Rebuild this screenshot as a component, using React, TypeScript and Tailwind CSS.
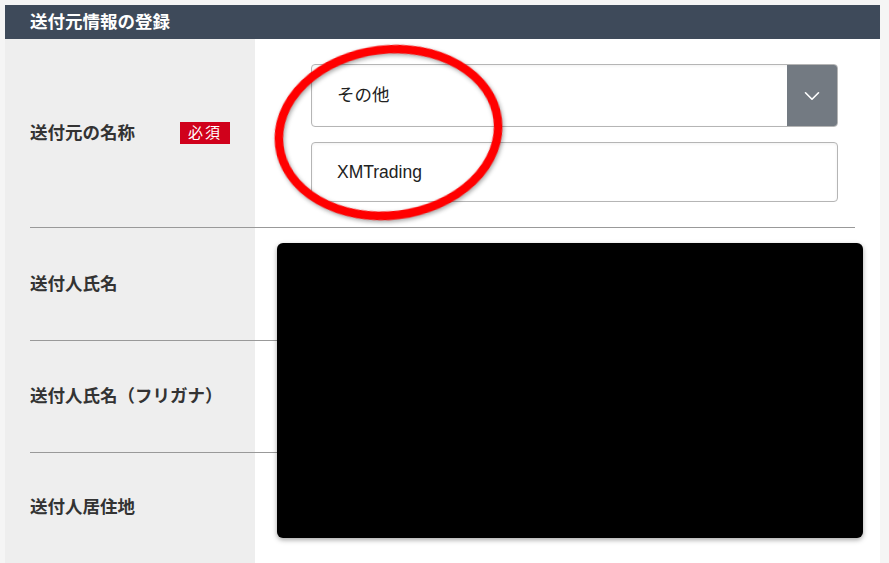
import { ChevronDown } from "lucide-react";

const font = "font-['Liberation_Sans','Noto_Sans_CJK_JP',sans-serif]";

const Row = ({
  label,
  height,
  last,
  children,
}: {
  label: React.ReactNode;
  height?: string;
  last?: boolean;
  children?: React.ReactNode;
}) => (
  <div className="px-[25px]">
    <div className={`flex ${last ? "" : "border-b border-[#999999]"} ${height ?? ""}`}>
      <div className="w-[225px] flex items-center text-[17.5px] font-bold text-[#333333]">{label}</div>
      <div className="flex-1">{children}</div>
    </div>
  </div>
);

export default function App() {
  return (
    <div className={`relative min-h-screen bg-[#f5f5f5] pt-[5px] ${font}`}>
      <div className="ml-[5px] w-[875px] h-[558px] overflow-hidden bg-[linear-gradient(to_right,#eeeeee_250px,#ffffff_250px)]">
        {/* Header */}
        <div className="h-[34px] bg-[#3e4a5a] flex items-center pl-[25px]">
          <h2 className="text-white text-[17.5px] font-bold">送付元情報の登録</h2>
        </div>

        {/* 送付元の名称 */}
        <Row
          label={
            <div className="flex items-center">
              <span>送付元の名称</span>
              <span className="ml-[45px] w-[50px] h-[22px] bg-[#d0011b] text-white text-[15px] font-normal flex items-center justify-center tracking-[2px]">
                必須
              </span>
            </div>
          }
        >
          <div className="pl-[56px] pr-[17px] py-[25px] flex flex-col gap-[15px]">
            <div className="h-[63px] flex border border-[#b5b5b5] rounded-[4px] overflow-hidden shadow-[inset_0_1px_3px_rgba(0,0,0,0.06)]">
              <div className="flex-1 flex items-center pl-[25px] text-[17.5px] text-[#222222]">その他</div>
              <div className="w-[50px] bg-[#737a82] flex items-center justify-center">
                <ChevronDown className="w-[26px] h-[26px] text-white" strokeWidth={1.5} />
              </div>
            </div>
            <div className="h-[60px] flex items-center border border-[#b5b5b5] rounded-[4px] pl-[25px] text-[17.5px] text-[#222222] shadow-[inset_0_1px_3px_rgba(0,0,0,0.06)]">
              XMTrading
            </div>
          </div>
        </Row>

        <Row label="送付人氏名" height="h-[113px]" />
        <Row label="送付人氏名（フリガナ）" height="h-[112px]" />
        <Row label="送付人居住地" height="h-[108px]" last />
      </div>

      {/* redacted area */}
      <div className="absolute left-[277px] top-[243px] w-[586px] h-[295px] bg-black rounded-[6px] shadow-[0_2px_5px_rgba(0,0,0,0.35)]" />

      {/* annotation ring */}
      <svg className="absolute left-0 top-0 pointer-events-none" width="889" height="563">
        <ellipse
          cx="388.5"
          cy="132.5"
          rx="110"
          ry="83"
          fill="none"
          stroke="#ff0000"
          strokeWidth="8.5"
          transform="rotate(-7 388.5 132.5)"
          style={{ filter: "drop-shadow(1px 2px 2px rgba(0,0,0,0.35))" }}
        />
      </svg>
    </div>
  );
}
